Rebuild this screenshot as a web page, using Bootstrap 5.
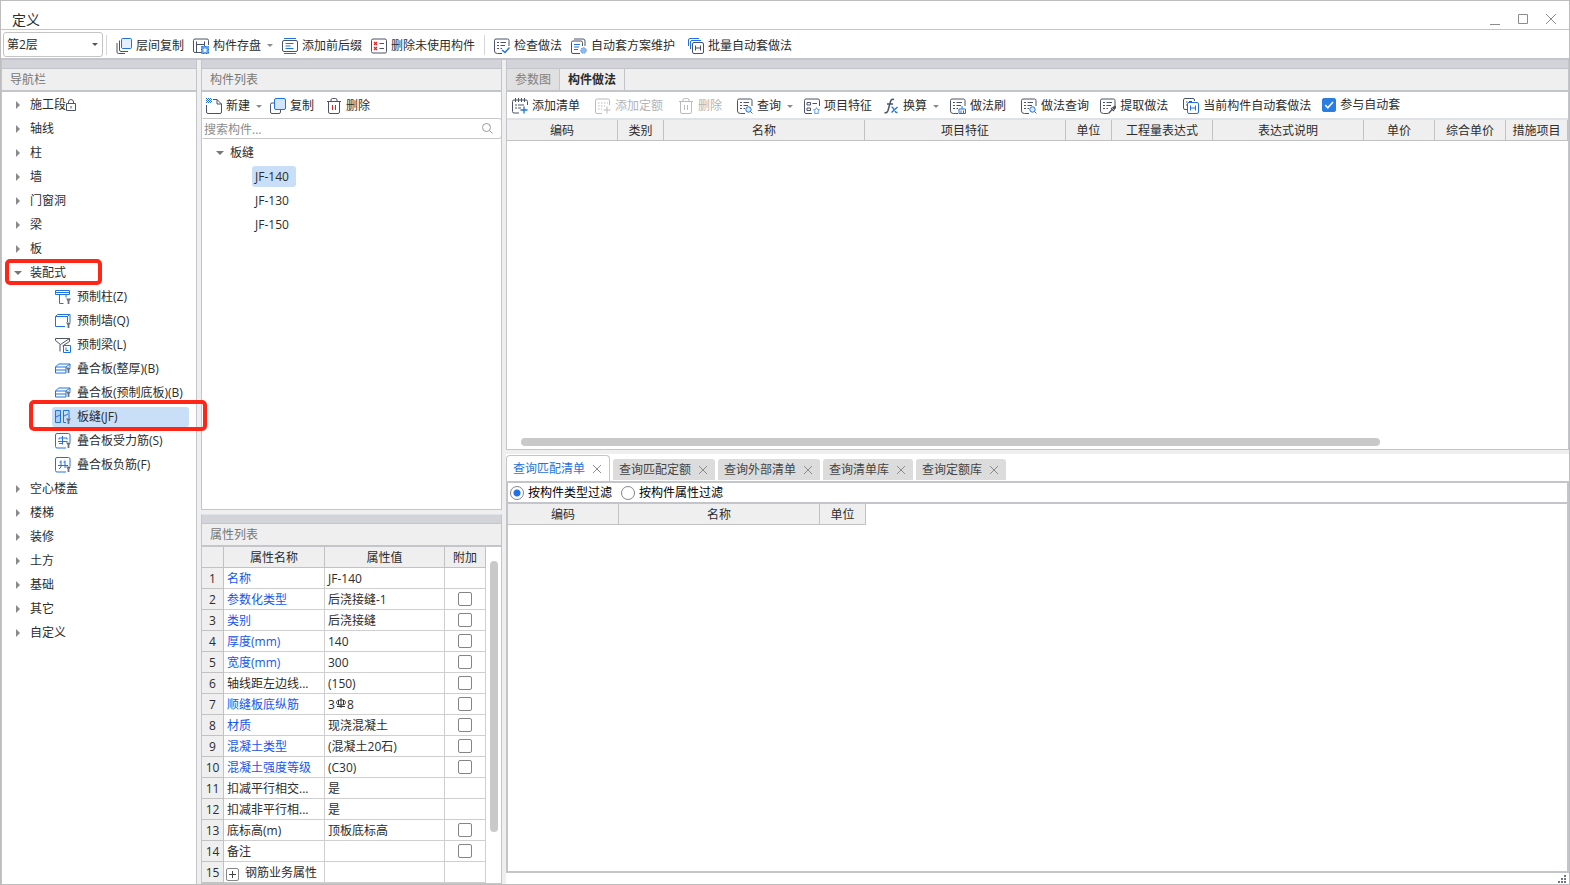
<!DOCTYPE html>
<html lang="zh-CN">
<head>
<meta charset="utf-8">
<meta name="viewport" content="width=device-width, initial-scale=1">
<title>定义</title>
<link href="https://cdn.jsdelivr.net/npm/bootstrap@5.3.0/dist/css/bootstrap.min.css" rel="stylesheet">
<style>
:root{--line:#c3c5cb;--soft:#efefef;--ink:#2c2c2c;--blue:#1f72e0;--sel:#c9dff8}
body{font-family:"Open Sans","Noto Sans CJK SC",sans-serif;font-size:12px;line-height:20px;color:var(--ink);background:#fff}
.window{height:100vh;border:1px solid #bdbdbd}
.titlebar{height:29px;border-bottom:1px solid var(--line);padding:8px 4px 0 11px;font-size:14px}
.winbtn{width:28px;height:20px;border:0;background:none;padding:0;line-height:0}
.maintools{height:28px;padding:1px 0 0 2px;gap:9px}
.floorbox{gap:3px}
.floor{width:100px;height:25px;font-size:12px;line-height:18px;padding:2px 20px 2px 3px;border:1px solid #c4c4c4;border-radius:3px;color:var(--ink);background-image:none}
.floorbox::after{content:"";position:absolute;right:9px;top:11px;border:3px solid transparent;border-top:3px solid #555;border-bottom:0;pointer-events:none}
.vsep{width:1px;height:20px;background:#d6d6d6}
.tool{border:0;background:none;padding:0;color:inherit;display:flex;align-items:center;gap:4px;white-space:nowrap;line-height:20px}
button.tool{padding-top:2px}
.tool:disabled{color:#b4b4b4}
.tool .drop{margin-left:2px}
.drop{border:3px solid transparent;border-top:3px solid #8b8b8b;border-bottom:0}
.ic{width:16px;height:16px;fill:none;stroke:#4b5366;stroke-width:1;flex:none}
.tool:disabled .ic{stroke:#bbb}
.workspace{background:var(--soft);gap:4px;border-top:2px solid var(--line)}
.navcol{width:196px;border:1px solid var(--line);border-width:0 1px}
.listcol{width:301px}
.pane{background:#fff;border:1px solid var(--line);border-top:0}
.grip{height:9px;background:#d2d4da;border-bottom:1px solid var(--line)}
.panehead{height:23px;background:var(--soft);border-bottom:2px solid var(--line);color:#777;padding:1px 0 0 8px}
.panehead.tabbed{padding:0}
.toolrow{height:26px}
.arrow{width:12px;display:flex;justify-content:center}
.arrow::before{content:"";border:4px solid transparent;border-left:4px solid #8a8a8a;border-right:0}
.arrow.open::before{border:4px solid transparent;border-top:4px solid #777;border-bottom:0}
.tree{padding-top:1px}
.tree li{height:24px;display:flow-root}
.tree a{color:inherit;text-decoration:none;display:flex;align-items:center;height:24px;white-space:nowrap}
.tree .branch{padding-left:10px;gap:6px}
.tree .rootnode{padding-left:12px;gap:4px}
.tree .leaf{height:20px;margin:2px 7px 2px 50px;padding-left:3px;gap:6px;border-radius:3px}
.tree .leaf.on,.comp.on{background:var(--sel)}
.tree .leaf .ic{stroke:var(--blue)}
.redmark{position:absolute;border:4px solid #ff2618;border-radius:5px;pointer-events:none;z-index:2}
.mark-group{left:3px;width:97px;top:-2px;height:26px}
.mark-item{left:27px;width:178px;top:-5px;height:31px}
.tree .comp{width:44px;height:21px;padding:0 0 0 3px;margin:1px 0 2px 50px;border-radius:3px}
.complist{padding-top:2px}
.search{height:21px;border:1px solid #c6c6c6;border-radius:3px;margin:0 -1px}
.search input{border:0;outline:0;padding:2px 0 0 2px;font-size:12px;line-height:17px;height:19px;min-width:0}
.search input::placeholder{color:#8b8b8b}
.sheet{table-layout:fixed;border-collapse:separate;border-spacing:0;line-height:18px}
.sheet th,.sheet td{height:21px;padding:2px 0 0 3px;border-right:1px solid #cfcfcf;border-bottom:1px solid #cfcfcf;white-space:nowrap;overflow:hidden;font-weight:400}
.sheet th{background:var(--soft);text-align:center;padding:2px 0 0;border-color:#c2c2c2}
.bill col:nth-child(1){width:111px}.bill col:nth-child(2),.bill col:nth-child(5){width:46px}
.bill col:nth-child(3),.bill col:nth-child(4){width:201px}.bill col:nth-child(6){width:101px}
.bill col:nth-child(7){width:151px}.bill col:nth-child(8),.bill col:nth-child(9){width:71px}
.match{width:358px}
.match col:nth-child(1){width:111px}.match col:nth-child(2){width:201px}
.props{width:284px}
.props col:nth-child(1){width:22px}.props col:nth-child(2){width:101px}.props col:nth-child(3){width:120px}
.props td:nth-child(4){text-align:center;padding:0;line-height:0}
.props .key{color:#1556f0}
.rebar{margin:0 1px;vertical-align:1px}
.box{appearance:none;width:14px;height:14px;border:1px solid #858585;border-radius:2px;background:#fff;margin:0;vertical-align:middle;flex:none}
.box:checked{border-color:#2a7de1;background:#2a7de1 url("data:image/svg+xml,%3Csvg xmlns='http://www.w3.org/2000/svg' viewBox='0 0 12 12'%3E%3Cpath d='M2.2 6l2.6 2.8L10 3' fill='none' stroke='%23fff' stroke-width='1.6'/%3E%3C/svg%3E") center/12px no-repeat}
.dot{appearance:none;width:14px;height:14px;border:1px solid #858585;border-radius:50%;margin:0;flex:none}
.dot:checked{background:radial-gradient(circle,#1f72e0 3px,#fff 4px)}
.rail{width:14px;padding:14px 3px 0 0}
.thumb-v{width:8px;height:271px;border-radius:4px;background:#c9c9c9;margin-left:auto}
.thumb-h{width:81%;height:8px;border-radius:4px;background:#c9c9c9;margin:0 0 3px 14px}
.plus{width:13px;height:13px;border:1px solid #888;border-radius:2px;background:none;padding:0;line-height:0;margin:0 6px 0 -1px;display:inline-flex;align-items:center;justify-content:center;vertical-align:-1px}
.viewtab{border:0;border-right:1px solid var(--line);padding:0 8px;background:transparent;color:var(--ink);height:21px;line-height:20px}
.viewtab.off{background:#e0e0e0;color:#808080}
.upper{flex:389 1 0}.lower{flex:429 1 0}
.qtabs{height:29px;background:#fff;gap:3px;border-bottom:2px solid var(--line)}
.qtab{border:0;background:#dcdcdc;color:#444;height:21px;padding:1px 7px 0 6px;gap:7px;border-radius:3px 3px 0 0;margin-bottom:1px}
.qtab.on{background:#fff;color:var(--blue);height:26px;border:1px solid var(--line);border-bottom:0;margin-bottom:0;border-radius:4px 4px 0 0;padding:0 7px 0 6px}
.qtab svg,.winbtn svg{fill:none;stroke:#8c8c8c;stroke-width:1}
.filter{height:21px;border:2px solid var(--line);border-top:0;color:#000;padding-left:2px;gap:9px}
.result{border:2px solid var(--line);border-top:0}
.foot{height:11px;background:#fff;padding:0 3px 1px 0}
.btools{gap:11px;padding-left:5px}
.wide{margin-right:4px}
</style>
</head>
<body>
<svg width="0" height="0" class="position-absolute">
<defs>
<symbol id="layers" viewBox="0 0 16 16"><path d="M3.500 2.500v9.500q0 1.500 1.500 1.500h7M1 5v9q0 1.500 1.500 1.500H9"/><rect x="5.500" y=".5" width="10" height="10" rx="1.200" fill="#e4f0ff" stroke="#1f72e0"/></symbol>
<symbol id="save" viewBox="0 0 16 16"><path d="M8 14.500H2A1.500 1.500 0 0 1 .5 13V2.500A1.500 1.500 0 0 1 2 1h12a1.500 1.500 0 0 1 1.500 1.500V7M3.500 3.500v11M3.500 6.500h8M11.500 3.500V8"/><rect x="8.500" y="8.500" width="7" height="7" fill="#5b9ff0" stroke="#1f72e0" stroke-dasharray="2 1"/><path d="M12 9.500l.8 1.700 1.700.2-1.300 1.200.4 1.800-1.600-.9-1.600.9.400-1.800-1.300-1.200 1.700-.2z" fill="#fff" stroke="none"/></symbol>
<symbol id="affix" viewBox="0 0 16 16"><path d="M2 .5h12M2 15.500h12" stroke="#1f72e0"/><rect x=".5" y="2.500" width="15" height="11" rx="1.500"/><path d="M3.500 5.500h8M3.500 8h5M3.500 10.500h8" stroke="#1f72e0"/></symbol>
<symbol id="unused" viewBox="0 0 16 16"><rect x=".5" y="1" width="15" height="14" rx="1.500"/><path d="M3 4l3 3M6 4L3 7M3 9l3 3M6 9l-3 3" stroke="#e02020" stroke-width="1.200"/><path d="M8.500 5.500H13M8.500 10.500H13"/></symbol>
<symbol id="doc" viewBox="0 0 16 16"><path d="M8 15.500H3.500Q.5 15.500.5 13V2.500Q.5 1 2 1h11.500q1.500 0 1.500 1.500V8M3 4.500h2M6.500 4.500H12M3 7.500h2M6.500 7.500H11M3 10.500h2M6.500 10.500H8"/></symbol>
<symbol id="check" viewBox="0 0 16 16"><use href="#doc"/><path d="M8 12l3 2.500 4.500-5" stroke="#1f72e0" stroke-width="1.500"/></symbol>
<symbol id="scheme" viewBox="0 0 16 16"><path d="M9 15.500H2Q.5 15.500.5 14V4.500Q.5 3 2 3h8q1.500 0 1.500 1.500V8M3 1h9Q14 1 14 3v5"/><path d="M3 6.500h6M3 9h5M3 11.500h4" stroke="#1f72e0"/><circle cx="12.500" cy="12.500" r="2.800" fill="#8fbcf2" stroke="#5b96e0" stroke-dasharray="1.500 1"/></symbol>
<symbol id="batch" viewBox="0 0 16 16"><path d="M.5 8V2Q.5.5 2 .5h9M2.500 11V4Q2.500 2.500 4 2.500h9" stroke="#1f72e0"/><rect x="4.500" y="4.500" width="11" height="11" rx="1.500"/><path d="M7.500 7.500v5M12.500 7.500v5M7.500 10h5"/></symbol>
<symbol id="new" viewBox="0 0 16 16"><path d="M7 1.500h4l4.500 4.500V14q0 1.500-1.500 1.500H2Q.5 15.500.5 14V7M11 1.500V6h4.500"/><path d="M0 .5h5M0 2.500h5M0 4.500h5" stroke="#1f72e0" stroke-dasharray="1 1"/><path d="M1 1.500h5M1 3.500h5" stroke="#1f72e0" stroke-dasharray="1 1"/></symbol>
<symbol id="copy" viewBox="0 0 16 16"><path d="M4.500 5H2Q.5 5 .5 6.500V14q0 1.500 1.500 1.500h7q1.500 0 1.500-1.500v-2"/><rect x="4.500" y=".5" width="11" height="11" rx="1.500" fill="#d3e5fc" stroke="#1f72e0"/></symbol>
<symbol id="trash" viewBox="0 0 16 16"><path d="M1 3.500h14M5 3.500V2q0-1.500 1.500-1.500h3Q11 .5 11 2v1.500M2.500 3.500V14q0 1.500 1.500 1.500h8q1.500 0 1.500-1.500V3.500"/></symbol>
<symbol id="addlist" viewBox="0 0 16 16"><path d="M7 15H2Q.5 15 .5 13.500v-10Q.5 2 2 2h12q1.500 0 1.500 1.500V7M3.500 0v4M6.500 0v4M9.500 0v4M12.500 0v4M3 7h2M6 7h6M3 10h2M6 10h3"/><path d="M12 8.500v7M8.500 12h7" stroke="#1f72e0" stroke-width="1.300"/></symbol>
<symbol id="addquota" viewBox="0 0 16 16"><path d="M7 15.500H2Q.5 15.500.5 14V2.500Q.5 1 2 1h11q1.500 0 1.500 1.500V7"/><path d="M3 5h10M3 8h7M3 11h4" stroke-dasharray="1.500 1.500"/><path d="M12 8.500v7M8.500 12h7"/></symbol>
<symbol id="find" viewBox="0 0 16 16"><use href="#doc"/><circle cx="11.500" cy="11.500" r="2.700" fill="#dcebff" stroke="#1f72e0"/><path d="M13.500 13.500l2 2" stroke="#1f72e0"/></symbol>
<symbol id="feature" viewBox="0 0 16 16"><path d="M8 15.500H2Q.5 15.500.5 14V2.500Q.5 1 2 1h12q1.500 0 1.500 1.500V8M3 4.500h3.500v2.500H3zM3 10h3.500v2.500H3zM8.500 5.500H13"/><path d="M12.500 9.500l1 2 2 .3-1.500 1.400.4 2.200h-3.800l.4-2.200-1.500-1.400 2-.3z" stroke="#5b9ff0"/></symbol>
<symbol id="brush" viewBox="0 0 16 16"><use href="#doc"/><path d="M12 8v3M9 11h6.500v4.500H9zM11 12.500v3M13.500 12.500v3" stroke="#1f72e0"/></symbol>
<symbol id="extract" viewBox="0 0 16 16"><use href="#doc"/><path d="M8.500 15.500l4-4.500M11 10l3 3" stroke-width="1.300"/><path d="M12.500 9.500l2 2L16 9l-1-1z" fill="#4b5366"/></symbol>
<symbol id="current" viewBox="0 0 16 16"><path d="M4 11.500H2Q.5 11.500.5 10V2Q.5.5 2 .5h8q1.500 0 1.500 1.500v1M3 4h1.500M6 3.500h3M3 7h1"/><rect x="4.500" y="4.500" width="11" height="11" rx="1.500" stroke="#1f72e0" fill="#fff"/><path d="M7.500 7.500v5M12.500 7.500v5M7.500 10h5" stroke="#1f72e0"/></symbol>
<symbol id="filt" viewBox="0 0 16 16"><path d="M11 9.500h5l-1.600 2.500v3h-1.800v-3z" stroke="none" fill="#6b7182"/></symbol>
<symbol id="pcol" viewBox="0 0 16 16"><path d="M.5 1.500h14v4H.5zM.5 3.500h14M4.500 5.500v9h4M11 5.500v3"/><use href="#filt"/></symbol>
<symbol id="pwall" viewBox="0 0 16 16"><path d="M10 13.500H.5v-10h12V9M.5 3.500l2-2h12.500V9M12.500 3.500l2-2"/><use href="#filt"/></symbol>
<symbol id="pbeam" viewBox="0 0 16 16"><path d="M.5 1.500h14L5.500 7.500.5 3.500zM5 7.500v7M14.500 1.500v3L7.500 9" stroke="#4b5366"/><path d="M8.500 8.500h7v7h-7zM11 10.500v3h2.500"/></symbol>
<symbol id="slab" viewBox="0 0 16 16"><path d="M.5 6h10.500v6H.5zM.5 6l3-3H15v3M11 6l4-3M.5 9H11"/><use href="#filt" y="-3"/></symbol>
<symbol id="seam" viewBox="0 0 16 16"><path d="M.5 1.500h5v12h-5z" fill="#a9ccf5"/><path d="M8.500 13.500v-12h5.500v8M8.500 13.500H11M1 8l4-2M9 7l4-2"/><use href="#filt"/></symbol>
<symbol id="bars" viewBox="0 0 16 16"><path d="M11 15H2Q.5 15 .5 13.500V2Q.5.5 2 .5h11.500Q15 .5 15 2v7M4 6.500V5h8v1.500M3 8.500h9.500M7.500 3v8.500M4 10.500h3.500"/><use href="#filt"/></symbol>
<symbol id="nbars" viewBox="0 0 16 16"><path d="M11 15H2Q.5 15 .5 13.500V2Q.5.5 2 .5h11.500Q15 .5 15 2v7M3 8.500h10M6 3.500V10l-2 2M10 3.500V11M4.500 5H6M8.500 5H10"/><use href="#filt"/></symbol>
<symbol id="x" viewBox="0 0 10 10"><path d="M1 1l8 8M9 1L1 9"/></symbol>
</defs>
</svg>

<div class="window d-flex flex-column overflow-hidden">
  <header class="titlebar d-flex justify-content-between">
    <span class="lh-base">定义</span>
    <div class="d-flex">
      <button class="winbtn" aria-label="最小化"><svg width="12" height="12"><path d="M1 11.500h10"/></svg></button>
      <button class="winbtn" aria-label="最大化"><svg width="12" height="12"><path d="M1.500 1.500h9v9h-9z"/></svg></button>
      <button class="winbtn" aria-label="关闭"><svg width="12" height="12"><path d="M1 1l10 10M11 1L1 11"/></svg></button>
    </div>
  </header>

  <div class="maintools d-flex align-items-center">
    <div class="floorbox position-relative d-flex align-items-center">
      <select class="form-select floor" aria-label="楼层"><option>第2层</option></select>
      <span class="vsep"></span>
    </div>
    <button class="tool"><svg class="ic"><use href="#layers"/></svg>层间复制</button>
    <button class="tool"><svg class="ic"><use href="#save"/></svg>构件存盘<span class="drop"></span></button>
    <button class="tool"><svg class="ic"><use href="#affix"/></svg>添加前后缀</button>
    <button class="tool"><svg class="ic"><use href="#unused"/></svg>删除未使用构件</button>
    <span class="vsep"></span>
    <button class="tool"><svg class="ic"><use href="#check"/></svg>检查做法</button>
    <button class="tool wide"><svg class="ic"><use href="#scheme"/></svg>自动套方案维护</button>
    <button class="tool"><svg class="ic"><use href="#batch"/></svg>批量自动套做法</button>
  </div>

  <main class="workspace d-flex flex-fill overflow-hidden">
    <nav class="navcol bg-white flex-shrink-0">
      <div class="grip"></div>
      <div class="panehead">导航栏</div>
      <ul class="tree list-unstyled m-0">
        <li><a class="branch" href="#"><span class="arrow"></span><span class="d-flex align-items-center">施工段<svg width="10" height="12" fill="none" stroke="#4b5366"><path d="M.5 4.500h9v7h-9zM2.500 4.500V3q0-2.500 2.500-2.500T7.500 3v1.500M5 7v2.500"/></svg></span></a></li>
        <li><a class="branch" href="#"><span class="arrow"></span>轴线</a></li>
        <li><a class="branch" href="#"><span class="arrow"></span>柱</a></li>
        <li><a class="branch" href="#"><span class="arrow"></span>墙</a></li>
        <li><a class="branch" href="#"><span class="arrow"></span>门窗洞</a></li>
        <li><a class="branch" href="#"><span class="arrow"></span>梁</a></li>
        <li><a class="branch" href="#"><span class="arrow"></span>板</a></li>
        <li class="position-relative"><a class="branch" href="#"><span class="arrow open"></span>装配式</a><span class="redmark mark-group"></span></li>
        <li><a class="leaf" href="#"><svg class="ic"><use href="#pcol"/></svg>预制柱(Z)</a></li>
        <li><a class="leaf" href="#"><svg class="ic"><use href="#pwall"/></svg>预制墙(Q)</a></li>
        <li><a class="leaf" href="#"><svg class="ic"><use href="#pbeam"/></svg>预制梁(L)</a></li>
        <li><a class="leaf" href="#"><svg class="ic"><use href="#slab"/></svg>叠合板(整厚)(B)</a></li>
        <li><a class="leaf" href="#"><svg class="ic"><use href="#slab"/></svg>叠合板(预制底板)(B)</a></li>
        <li class="position-relative"><a class="leaf on" href="#"><svg class="ic"><use href="#seam"/></svg>板缝(JF)</a><span class="redmark mark-item"></span></li>
        <li><a class="leaf" href="#"><svg class="ic"><use href="#bars"/></svg>叠合板受力筋(S)</a></li>
        <li><a class="leaf" href="#"><svg class="ic"><use href="#nbars"/></svg>叠合板负筋(F)</a></li>
        <li><a class="branch" href="#"><span class="arrow"></span>空心楼盖</a></li>
        <li><a class="branch" href="#"><span class="arrow"></span>楼梯</a></li>
        <li><a class="branch" href="#"><span class="arrow"></span>装修</a></li>
        <li><a class="branch" href="#"><span class="arrow"></span>土方</a></li>
        <li><a class="branch" href="#"><span class="arrow"></span>基础</a></li>
        <li><a class="branch" href="#"><span class="arrow"></span>其它</a></li>
        <li><a class="branch" href="#"><span class="arrow"></span>自定义</a></li>
      </ul>
    </nav>

    <div class="listcol d-flex flex-column flex-shrink-0 gap-1">
      <section class="pane flex-fill overflow-hidden">
        <div class="grip"></div>
        <div class="panehead">构件列表</div>
        <div class="toolrow d-flex align-items-center ps-1 gap-2">
          <button class="tool"><svg class="ic"><use href="#new"/></svg>新建<span class="drop"></span></button>
          <button class="tool wide"><svg class="ic"><use href="#copy"/></svg>复制</button>
          <button class="tool"><svg class="ic"><use href="#trash"/><path d="M6.500 7v5M9.500 7v5" stroke="#e02020"/></svg>删除</button>
        </div>
        <div class="search d-flex align-items-center pe-2">
          <input class="flex-fill" type="text" placeholder="搜索构件..." aria-label="搜索构件">
          <svg width="11" height="11" fill="none" stroke="#999"><circle cx="4.500" cy="4.500" r="4"/><path d="M7.500 7.500l3 3"/></svg>
        </div>
        <ul class="tree complist list-unstyled m-0">
          <li><a class="rootnode" href="#"><span class="arrow open"></span>板缝</a></li>
          <li><a class="comp on" href="#">JF-140</a></li>
          <li><a class="comp" href="#">JF-130</a></li>
          <li><a class="comp" href="#">JF-150</a></li>
        </ul>
      </section>

      <section class="pane border-top flex-shrink-0">
        <div class="grip"></div>
        <div class="panehead">属性列表</div>
        <div class="d-flex justify-content-between">
          <table class="sheet props">
            <colgroup><col><col><col><col></colgroup>
            <thead><tr><th></th><th>属性名称</th><th>属性值</th><th>附加</th></tr></thead>
            <tbody>
            <tr><th>1</th><td class="key">名称</td><td>JF-140</td><td></td></tr>
            <tr><th>2</th><td class="key">参数化类型</td><td>后浇接缝-1</td><td><input class="box" type="checkbox" aria-label="附加 参数化类型"></td></tr>
            <tr><th>3</th><td class="key">类别</td><td>后浇接缝</td><td><input class="box" type="checkbox" aria-label="附加 类别"></td></tr>
            <tr><th>4</th><td class="key">厚度(mm)</td><td>140</td><td><input class="box" type="checkbox" aria-label="附加 厚度"></td></tr>
            <tr><th>5</th><td class="key">宽度(mm)</td><td>300</td><td><input class="box" type="checkbox" aria-label="附加 宽度"></td></tr>
            <tr><th>6</th><td>轴线距左边线...</td><td>(150)</td><td><input class="box" type="checkbox" aria-label="附加 轴线距左边线"></td></tr>
            <tr><th>7</th><td class="key">顺缝板底纵筋</td><td>3<svg class="rebar" width="10" height="10" fill="none" stroke="#333"><path d="M5 0v10M2.500 2v5M7.500 2v5M1 8.500h8"/><ellipse cx="5" cy="4.500" rx="4.500" ry="2.500"/></svg>8</td><td><input class="box" type="checkbox" aria-label="附加 顺缝板底纵筋"></td></tr>
            <tr><th>8</th><td class="key">材质</td><td>现浇混凝土</td><td><input class="box" type="checkbox" aria-label="附加 材质"></td></tr>
            <tr><th>9</th><td class="key">混凝土类型</td><td>(混凝土20石)</td><td><input class="box" type="checkbox" aria-label="附加 混凝土类型"></td></tr>
            <tr><th>10</th><td class="key">混凝土强度等级</td><td>(C30)</td><td><input class="box" type="checkbox" aria-label="附加 混凝土强度等级"></td></tr>
            <tr><th>11</th><td>扣减平行相交...</td><td>是</td><td></td></tr>
            <tr><th>12</th><td>扣减非平行相...</td><td>是</td><td></td></tr>
            <tr><th>13</th><td>底标高(m)</td><td>顶板底标高</td><td><input class="box" type="checkbox" aria-label="附加 底标高"></td></tr>
            <tr><th>14</th><td>备注</td><td></td><td><input class="box" type="checkbox" aria-label="附加 备注"></td></tr>
            <tr><th>15</th><td><button class="plus" aria-label="展开"><svg width="7" height="7" stroke="#444"><path d="M0 3.500h7M3.500 0v7"/></svg></button>钢筋业务属性</td><td></td><td></td></tr>
            </tbody>
          </table>
          <div class="rail"><div class="thumb-v"></div></div>
        </div>
      </section>
    </div>

    <div class="d-flex flex-column flex-fill overflow-hidden">
      <section class="pane upper d-flex flex-column overflow-hidden">
        <div class="grip flex-shrink-0"></div>
        <div class="panehead tabbed d-flex flex-shrink-0">
          <button class="viewtab off">参数图</button>
          <button class="viewtab fw-bold">构件做法</button>
        </div>
        <div class="toolrow btools d-flex align-items-center flex-shrink-0">
          <button class="tool wide"><svg class="ic"><use href="#addlist"/></svg>添加清单</button>
          <button class="tool wide" disabled><svg class="ic"><use href="#addquota"/></svg>添加定额</button>
          <button class="tool" disabled><svg class="ic"><use href="#trash"/><path d="M6.500 7v5M9.500 7v5"/></svg>删除</button>
          <button class="tool ms-1"><svg class="ic"><use href="#find"/></svg>查询<span class="drop"></span></button>
          <button class="tool"><svg class="ic"><use href="#feature"/></svg>项目特征</button>
          <button class="tool"><svg class="ic"><path d="M11 1.500q-2.500-1-3.500 2L5 12.500q-1 3-3.500 2M4 6h6" stroke-width="1.500"/><path d="M8.500 9l1 .3 3.500 5 1.500.2M14.500 9L8.500 14.500" stroke="#1f72e0" stroke-width="1.300"/></svg>换算<span class="drop"></span></button>
          <button class="tool wide"><svg class="ic"><use href="#brush"/></svg>做法刷</button>
          <button class="tool"><svg class="ic"><use href="#find"/></svg>做法查询</button>
          <button class="tool wide"><svg class="ic"><use href="#extract"/></svg>提取做法</button>
          <button class="tool"><svg class="ic"><use href="#current"/></svg>当前构件自动套做法</button>
          <label class="tool"><input class="box" type="checkbox" checked>参与自动套</label>
        </div>
        <div class="border-top border-2 flex-fill">
          <table class="sheet bill w-100">
            <colgroup><col><col><col><col><col><col><col><col><col><col></colgroup>
            <thead><tr><th>编码</th><th>类别</th><th>名称</th><th>项目特征</th><th>单位</th><th>工程量表达式</th><th>表达式说明</th><th>单价</th><th>综合单价</th><th>措施项目</th></tr></thead>
          </table>
        </div>
        <div class="thumb-h flex-shrink-0"></div>
      </section>

      <section class="lower d-flex flex-column overflow-hidden mt-1">
        <div class="qtabs d-flex align-items-end flex-shrink-0">
          <button class="qtab on d-flex align-items-center">查询匹配清单<svg width="10" height="10"><use href="#x"/></svg></button>
          <button class="qtab d-flex align-items-center">查询匹配定额<svg width="10" height="10"><use href="#x"/></svg></button>
          <button class="qtab d-flex align-items-center">查询外部清单<svg width="10" height="10"><use href="#x"/></svg></button>
          <button class="qtab d-flex align-items-center">查询清单库<svg width="10" height="10"><use href="#x"/></svg></button>
          <button class="qtab d-flex align-items-center">查询定额库<svg width="10" height="10"><use href="#x"/></svg></button>
        </div>
        <div class="filter bg-white d-flex align-items-center flex-shrink-0">
          <label class="tool"><input class="dot" type="radio" name="filter" checked>按构件类型过滤</label>
          <label class="tool"><input class="dot" type="radio" name="filter">按构件属性过滤</label>
        </div>
        <div class="result bg-white flex-fill">
          <table class="sheet match">
            <colgroup><col><col><col></colgroup>
            <thead><tr><th>编码</th><th>名称</th><th>单位</th></tr></thead>
          </table>
        </div>
        <footer class="foot d-flex justify-content-end align-items-end flex-shrink-0">
          <svg width="8" height="8" fill="#6f7680"><path d="M6 0h2v2H6zM3 3h2v2H3zM6 3h2v2H6zM0 6h2v2H0zM3 6h2v2H3zM6 6h2v2H6z"/></svg>
        </footer>
      </section>
    </div>
  </main>
</div>
<script src="https://cdn.jsdelivr.net/npm/bootstrap@5.3.0/dist/js/bootstrap.bundle.min.js"></script>
</body>
</html>
